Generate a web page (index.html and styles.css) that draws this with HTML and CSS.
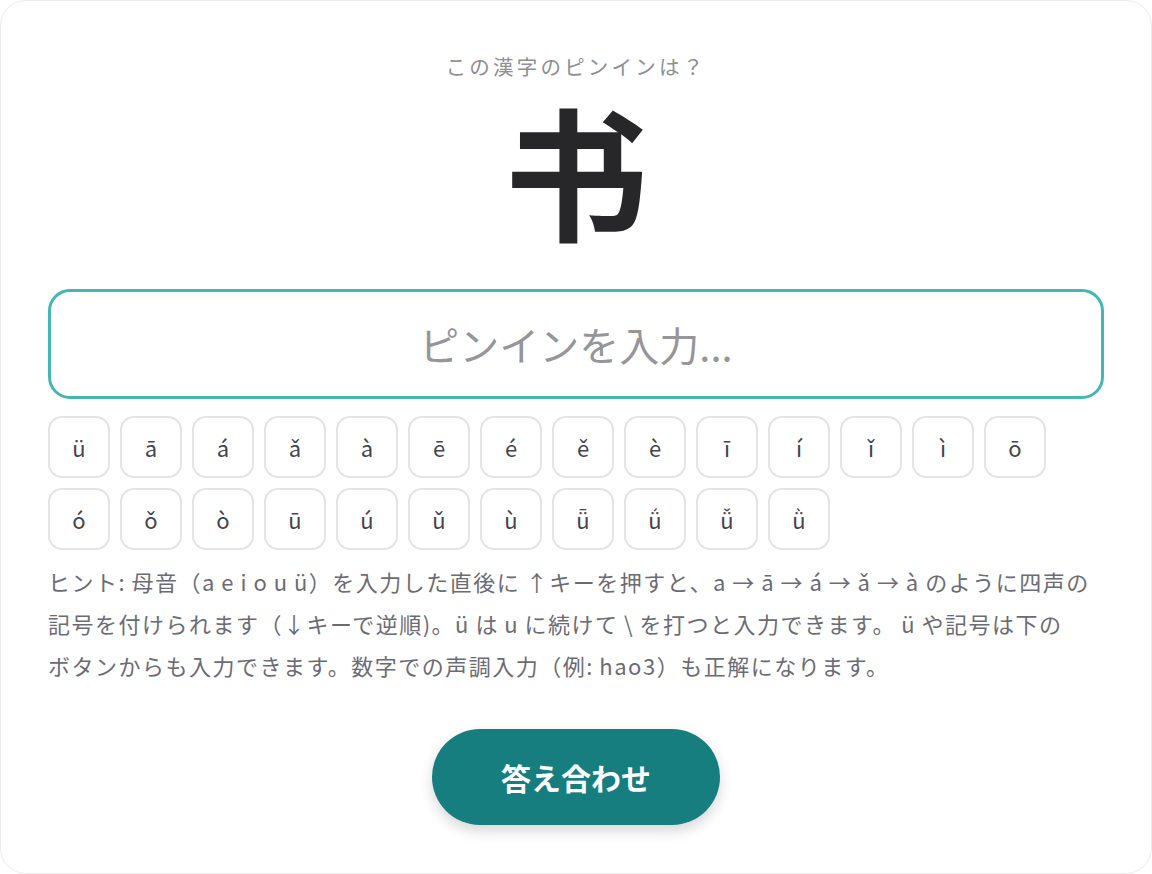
FILE: index.html
```html
<!DOCTYPE html>
<html lang="ja">
<head>
<meta charset="utf-8">
<title>ピンインクイズ</title>
<link rel="stylesheet" href="styles.css">
</head>
<body>
<main class="card">
  <p class="prompt">この漢字のピンインは？</p>
  <div class="hanzi">书</div>
  <input class="answer" type="text" placeholder="ピンインを入力...">
  <div class="keys">
    <button class="key">ü</button>
    <button class="key">ā</button>
    <button class="key">á</button>
    <button class="key">ǎ</button>
    <button class="key">à</button>
    <button class="key">ē</button>
    <button class="key">é</button>
    <button class="key">ě</button>
    <button class="key">è</button>
    <button class="key">ī</button>
    <button class="key">í</button>
    <button class="key">ǐ</button>
    <button class="key">ì</button>
    <button class="key">ō</button>
    <button class="key">ó</button>
    <button class="key">ǒ</button>
    <button class="key">ò</button>
    <button class="key">ū</button>
    <button class="key">ú</button>
    <button class="key">ǔ</button>
    <button class="key">ù</button>
    <button class="key">ǖ</button>
    <button class="key">ǘ</button>
    <button class="key">ǚ</button>
    <button class="key">ǜ</button>
  </div>
  <p class="hint">ヒント: 母音（a e i o u ü）を入力した直後に ↑キーを押すと、a → ā → á → ǎ → à のように四声の記号を付けられます（↓キーで逆順)。ü は u に続けて \ を打つと入力できます。 ü や記号は下の<span class="phrase">ボタンから</span>も入力できます。数字での声調入力（例: hao3）も正解になります。</p>
  <div class="actions">
    <button class="submit">答え合わせ</button>
  </div>
</main>
</body>
</html>
```
FILE: styles.css
```css
html, body {
  margin: 0;
  padding: 0;
  background: #ffffff;
}

body {
  font-family: "Noto Sans CJK JP", "Noto Sans", sans-serif;
}

.card {
  box-sizing: border-box;
  width: 1152px;
  height: 874px;
  background: #ffffff;
  border: 1px solid #ebebeb;
  border-radius: 26px;
  padding: 50px 47px 0;
  display: flex;
  flex-direction: column;
}

.prompt {
  margin: 0;
  text-align: center;
  font-size: 20.5px;
  line-height: 30px;
  letter-spacing: 3.2px;
  color: #8e8e93;
}

.hanzi {
  margin-top: 7px;
  text-align: center;
  font-size: 144px;
  font-weight: 700;
  line-height: 160px;
  height: 160px;
  color: #27272a;
}

.answer {
  box-sizing: border-box;
  margin-top: 41px;
  width: 100%;
  height: 110px;
  border: 3px solid #45b6b5;
  border-radius: 22px;
  outline: none;
  background: #ffffff;
  text-align: center;
  font-family: "Noto Sans CJK JP", "Noto Sans", sans-serif;
  font-size: 40px;
  color: #27272a;
  padding: 0 20px;
}

.answer::placeholder {
  color: #95959a;
}

.keys {
  margin-top: 17px;
  display: flex;
  flex-wrap: wrap;
  gap: 10px;
}

.key {
  box-sizing: border-box;
  width: 62px;
  height: 62px;
  border: 2px solid #e4e4e6;
  border-radius: 14px;
  background: #ffffff;
  font-family: "Noto Sans CJK JP", "Noto Sans", sans-serif;
  font-size: 22px;
  color: #44444f;
  padding: 0;
  display: flex;
  align-items: center;
  justify-content: center;
}

.hint {
  margin: 10px 0 0;
  font-size: 22px;
  line-height: 42px;
  letter-spacing: 1.5px;
  word-spacing: -1px;
  color: #6b6b75;
}

.phrase {
  white-space: nowrap;
}

.actions {
  margin-top: 43px;
  display: flex;
  justify-content: center;
}

.submit {
  width: 288px;
  height: 96px;
  border: none;
  border-radius: 48px;
  background: #177e80;
  color: #ffffff;
  font-family: "Noto Sans CJK JP", "Noto Sans", sans-serif;
  font-size: 30px;
  font-weight: 700;
  box-shadow: 0 6px 14px rgba(0, 0, 0, 0.16);
}
```
